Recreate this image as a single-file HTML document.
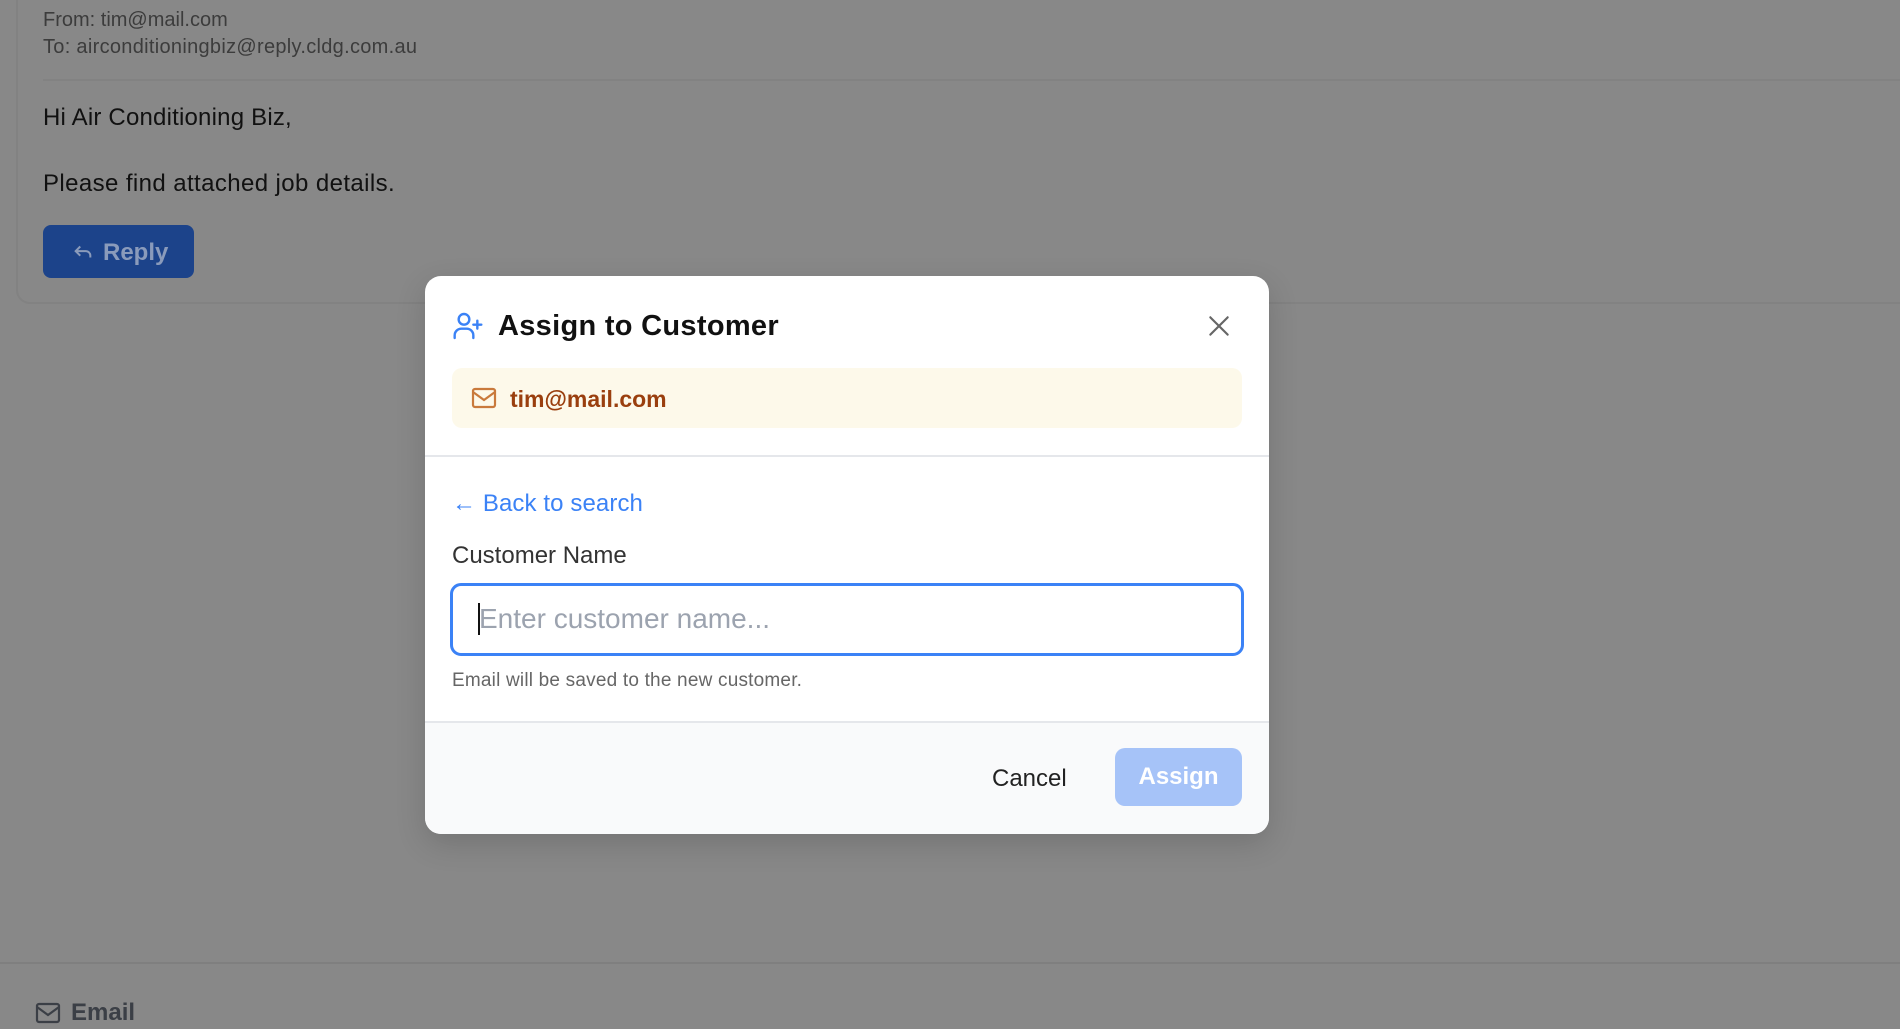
<!DOCTYPE html>
<html><head><meta charset="utf-8"><style>
*{box-sizing:border-box;margin:0;padding:0}
body{width:1900px;height:1029px;overflow:hidden;background:#888;font-family:"Liberation Sans",sans-serif;position:relative}
.a{position:absolute;white-space:nowrap}
</style></head><body>
<div class="a" style="left:16px;top:-20px;width:1900px;height:324px;border:2px solid #828282;border-radius:14px;"></div>
<div class="a" style="left:43px;top:9px;font-size:20px;color:#3c3c3c">From: tim@mail.com</div>
<div class="a" style="left:43px;top:36px;font-size:20px;color:#3c3c3c;letter-spacing:0.3px">To: airconditioningbiz@reply.cldg.com.au</div>
<div class="a" style="left:43px;top:79px;width:1860px;height:2px;background:#828282"></div>
<div class="a" style="left:43px;top:104px;font-size:24px;color:#111;letter-spacing:0.2px">Hi Air Conditioning Biz,</div>
<div class="a" style="left:43px;top:170px;font-size:24px;color:#111;letter-spacing:0.4px">Please find attached job details.</div>
<div class="a" style="left:43px;top:225px;width:151px;height:53px;background:#1c438a;border-radius:8px;color:#8a9bbb;font-size:24px;font-weight:bold;padding:14px 0 0 28px">
<svg width="24" height="22" viewBox="0 0 24 24" style="vertical-align:-3px;margin-right:8px" fill="none" stroke="#8a9bbb" stroke-width="2.2"><path d="M9 6L4 11l5 5M4 11h11a5 5 0 015 5v2"/></svg>Reply</div>
<div class="a" style="left:0;top:962px;width:1900px;height:2px;background:#7f7f7f"></div>
<svg class="a" style="left:35px;top:1002px" width="26" height="22" viewBox="0 0 26 22" fill="none" stroke="#3b3f46" stroke-width="2.2"><rect x="2" y="2" width="22" height="18" rx="2"/><path d="M2 5l11 8 11-8"/></svg>
<div class="a" style="left:71px;top:999px;font-size:24px;font-weight:bold;color:#3b3f46">Email</div>

<div class="a" style="left:425px;top:276px;width:844px;height:558px;background:#fff;border-radius:16px;overflow:hidden;box-shadow:0 10px 30px rgba(0,0,0,.15)">
<svg class="a" style="left:27px;top:34px" width="32" height="32" viewBox="0 0 24 24" fill="none" stroke="#3b82f6" stroke-width="1.8" stroke-linecap="round"><circle cx="9" cy="7" r="4"/><path d="M2 21v-2a5 5 0 015-5h4a5 5 0 015 5v2M19 8v6M16 11h6"/></svg>
<div class="a" style="left:73px;top:34px;font-size:29px;font-weight:bold;color:#111;letter-spacing:0.3px">Assign to Customer</div>
<svg class="a" style="left:781px;top:37px" width="26" height="26" viewBox="0 0 24 24" stroke="#666" stroke-width="2" stroke-linecap="round"><path d="M4 4l16 16M20 4L4 20"/></svg>
<div class="a" style="left:27px;top:92px;width:790px;height:60px;background:#fdf9ea;border-radius:10px"></div>
<svg class="a" style="left:46px;top:111px" width="26" height="22" viewBox="0 0 26 22" fill="none" stroke="#c97a3c" stroke-width="2.2"><rect x="2" y="2" width="22" height="18" rx="2"/><path d="M2 5l11 8 11-8"/></svg>
<div class="a" style="left:85px;top:110px;font-size:23px;font-weight:bold;color:#9a3f0e">tim@mail.com</div>
<div class="a" style="left:0;top:179px;width:844px;height:2px;background:#e5e7eb"></div>
<div class="a" style="left:27px;top:214px;font-size:24px;color:#3b82f6;letter-spacing:0.1px">← Back to search</div>
<div class="a" style="left:27px;top:266px;font-size:24px;color:#333">Customer Name</div>
<div class="a" style="left:25px;top:307px;width:794px;height:73px;border:3px solid #3b82f6;border-radius:11px"></div>
<div class="a" style="left:53px;top:327px;width:2px;height:32px;background:#111"></div>
<div class="a" style="left:54px;top:327px;font-size:28px;color:#9ca3af">Enter customer name...</div>
<div class="a" style="left:27px;top:394px;font-size:19px;color:#666;letter-spacing:0.2px">Email will be saved to the new customer.</div>
<div class="a" style="left:0;top:445px;width:844px;height:113px;background:#f9fafb;border-top:2px solid #e5e7eb"></div>
<div class="a" style="left:567px;top:489px;font-size:24px;color:#222">Cancel</div>
<div class="a" style="left:690px;top:472px;width:127px;height:58px;background:#a6c3f8;border-radius:10px;color:#fff;font-size:24px;font-weight:bold;text-align:center;line-height:58px">Assign</div>
</div>
</body></html>
